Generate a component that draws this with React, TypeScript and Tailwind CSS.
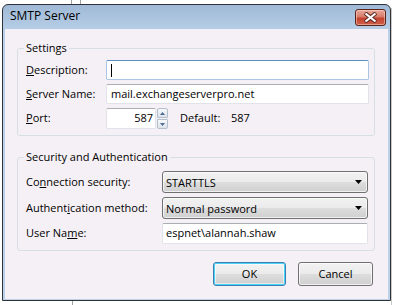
import React from "react";

function Combo({ text }: { text: string }) {
  return (
    <div className="relative h-[22px] flex-1 rounded-[3px] border border-[#707070] bg-[linear-gradient(#f2f2f2_0%,#ebebeb_48%,#dddddd_52%,#cfcfcf_100%)] flex items-center pl-[3px] pr-[4px] shadow-[inset_0_0_0_1px_rgba(255,255,255,0.7)]">
      <span className="flex-1 leading-none">{text}</span>
      <svg width="7" height="4" viewBox="0 0 7 4" className="mr-[1px]">
        <path d="M0 0H7L3.5 4Z" fill="#000" />
      </svg>
    </div>
  );
}

function Btn({ text, def }: { text: string; def?: boolean }) {
  return (
    <div
      className={
        "h-[24px] rounded-[3px] border flex items-center justify-center bg-[linear-gradient(#f2f2f2_0%,#ebebeb_48%,#dddddd_52%,#cfcfcf_100%)] " +
        (def
          ? "w-[73px] border-[#3c7fb1] shadow-[inset_0_0_0_1px_#48d3f7,inset_0_0_0_2px_rgba(255,255,255,0.5)]"
          : "w-[75px] border-[#707070] shadow-[inset_0_0_0_1px_rgba(255,255,255,0.7)]")
      }
    >
      {text}
    </div>
  );
}

export default function App() {
  return (
    <div className="relative w-[393px] h-[305px] overflow-hidden bg-white font-['Open_Sans','Noto_Sans',sans-serif] text-[11px] text-black">
      <div className="absolute left-[71px] top-0 w-[10px] h-[4px] border-x border-[#a0a0a0]" />
      <div className="absolute left-[72px] top-[301px] w-px h-[4px] bg-[#a0a0a0]" />
      <div className="absolute left-[391px] top-[8px] w-px h-[297px] bg-[#c8c8c8]" />

      <div className="ml-[2px] mt-[4px] w-[389px] h-[297px] border border-[#2f3338] rounded-t-[6px] bg-[linear-gradient(#9fb9d6,#bcd2ea_30px,#bcd2ea)] flex flex-col">
        <div className="h-[24px] flex items-start shrink-0">
          <div className="pl-[7px] pt-[3px] text-[12px] leading-[16px] flex-1">SMTP Server</div>
          <div className="mt-[4px] mr-[4px] w-[31px] h-[17px] rounded-[3px] border border-[#5a2418] bg-[linear-gradient(#e9a99b_0%,#d77b6b_45%,#c4432f_55%,#d0604a_100%)] shadow-[inset_0_0_0_1px_rgba(255,220,210,0.5)] flex items-center justify-center">
            <svg width="13" height="11" viewBox="0 0 13 11">
              <path d="M1 1L12 10M12 1L1 10" stroke="#5a2a22" strokeWidth="4" />
              <path d="M1.5 1.5L11.5 9.5M11.5 1.5L1.5 9.5" stroke="#fff" strokeWidth="2.2" />
            </svg>
          </div>
        </div>

        <div className="flex-1 mx-[2px] mb-[1px] bg-[#f5f0f5] pl-[12px] pr-[13px] pt-[11px] flex flex-col">
          <fieldset className="border border-[#d5dfe5] rounded-[3px] pl-[8px] pr-[5px] pt-[4px] pb-[6px]">
            <legend className="ml-[-2px] px-[2px] leading-[16px]">Settings</legend>
            <div className="flex items-center h-[20px]">
              <div className="w-[80px]"><u className="underline-offset-[1px]">D</u>escription:</div>
              <div className="flex-1 h-[20px] rounded-[2px] border border-[#a9c7e4] border-t-[#5b8fc0] bg-white flex items-center pl-[4px]">
                <div className="w-px h-[13px] bg-black" />
              </div>
            </div>
            <div className="flex items-center h-[20px] mt-[4px]">
              <div className="w-[80px]"><u className="underline-offset-[1px]">S</u>erver Name:</div>
              <div className="flex-1 h-[20px] rounded-[2px] border border-[#e2e3ea] border-t-[#abadb3] bg-white flex items-center pl-[4px]">
                mail.exchangeserverpro.net
              </div>
            </div>
            <div className="flex items-center h-[21px] mt-[4px]">
              <div className="w-[80px]"><u className="underline-offset-[1px]">P</u>ort:</div>
              <div className="w-[50px] h-[21px] rounded-[2px] border border-[#e2e3ea] border-t-[#abadb3] bg-white flex items-center justify-end pr-[2px]">
                587
              </div>
              <div className="ml-[1px] w-[11px] h-[21px] flex flex-col">
                <div className="h-[10px] border border-[#b4bfcc] rounded-t-[2px] bg-[linear-gradient(#f6f8fb,#dde3ea)] flex items-center justify-center">
                  <svg width="5" height="3" viewBox="0 0 5 3"><path d="M0 3H5L2.5 0Z" fill="#4e6a93" /></svg>
                </div>
                <div className="h-[10px] mt-[1px] border border-[#b4bfcc] rounded-b-[2px] bg-[linear-gradient(#f6f8fb,#dde3ea)] flex items-center justify-center">
                  <svg width="5" height="3" viewBox="0 0 5 3"><path d="M0 0H5L2.5 3Z" fill="#4e6a93" /></svg>
                </div>
              </div>
              <div className="ml-[12px] w-[51px]">Default:</div>
              <div>587</div>
            </div>
          </fieldset>

          <fieldset className="mt-[13px] border border-[#d5dfe5] rounded-[3px] pl-[8px] pr-[6px] pt-[6px] pb-[6px]">
            <legend className="ml-[-2px] px-[2px] leading-[16px]">Security and Authentication</legend>
            <div className="flex items-center h-[22px]">
              <div className="w-[136px]">Co<u className="underline-offset-[1px]">n</u>nection security:</div>
              <Combo text="STARTTLS" />
            </div>
            <div className="flex items-center h-[22px] mt-[4px]">
              <div className="w-[136px]">Authent<u className="underline-offset-[1px]">i</u>cation method:</div>
              <Combo text="Normal password" />
            </div>
            <div className="flex items-center h-[21px] mt-[4px]">
              <div className="w-[136px]">User Na<u className="underline-offset-[1px]">m</u>e:</div>
              <div className="flex-1 h-[21px] rounded-[2px] border border-[#e2e3ea] border-t-[#abadb3] bg-white flex items-center pl-[3px]">
                espnet\alannah.shaw
              </div>
            </div>
          </fieldset>

          <div className="mt-[11px] flex justify-end gap-[12px] pr-[2px]">
            <Btn text="OK" def />
            <Btn text="Cancel" />
          </div>
        </div>
      </div>
    </div>
  );
}
